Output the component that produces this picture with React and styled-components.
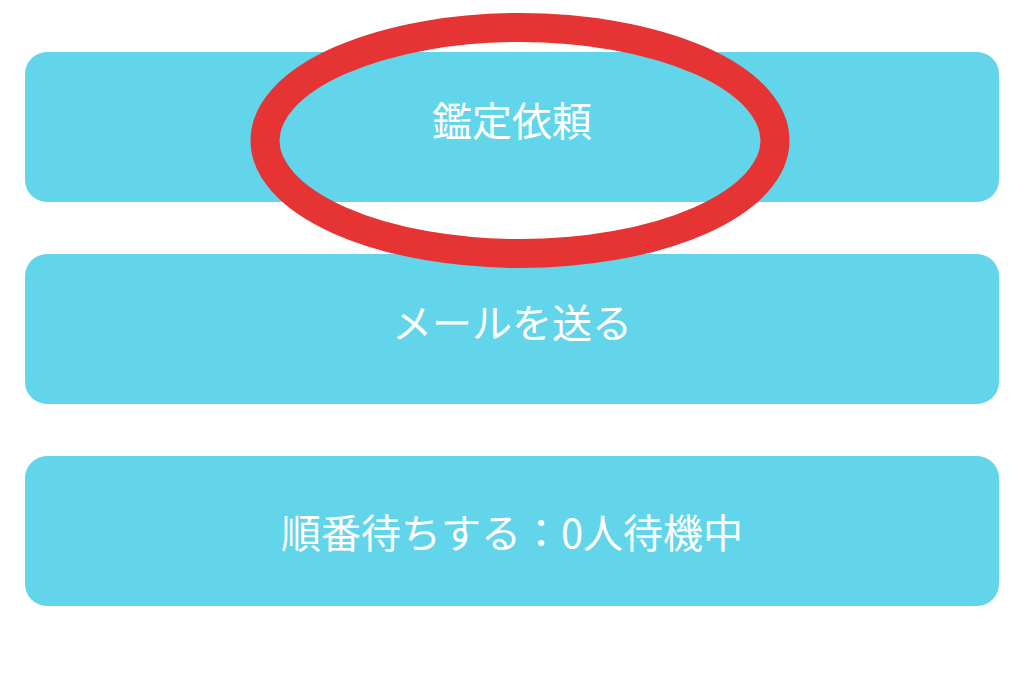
import React from 'react';
import styled, { createGlobalStyle } from 'styled-components';

const GlobalStyle = createGlobalStyle`
  html, body {
    margin: 0;
    padding: 0;
    background: #ffffff;
  }
  body {
    font-family: 'Noto Sans CJK JP', 'Noto Sans', sans-serif;
  }
`;

const Page = styled.div`
  position: relative;
  width: 1024px;
  height: 685px;
  box-sizing: border-box;
  padding: 52px 25px 0;
  display: flex;
  flex-direction: column;
  gap: 52px;
  overflow: hidden;
`;

const ActionButton = styled.button`
  height: 150px;
  width: 100%;
  border: none;
  border-radius: 22px;
  background-color: #62d5ea;
  color: #ffffff;
  font-family: 'Noto Sans CJK JP', 'Noto Sans', sans-serif;
  font-size: 40px;
  font-weight: 400;
  display: flex;
  align-items: center;
  justify-content: center;
  padding: 0 0 ${({ $lift }) => $lift * 2}px;
  cursor: pointer;
`;

const Annotation = styled.svg`
  position: absolute;
  left: 0;
  top: 0;
  pointer-events: none;
`;

function App() {
  return (
    <>
      <GlobalStyle />
      <Page>
        <ActionButton $lift={8}>鑑定依頼</ActionButton>
        <ActionButton $lift={8}>メールを送る</ActionButton>
        <ActionButton $lift={0}>順番待ちする：0人待機中</ActionButton>
        <Annotation width="1024" height="685" viewBox="0 0 1024 685">
          <ellipse
            cx="520"
            cy="140.5"
            rx="255"
            ry="113"
            fill="none"
            stroke="#e63434"
            strokeWidth="29"
          />
        </Annotation>
      </Page>
    </>
  );
}

export default App;
